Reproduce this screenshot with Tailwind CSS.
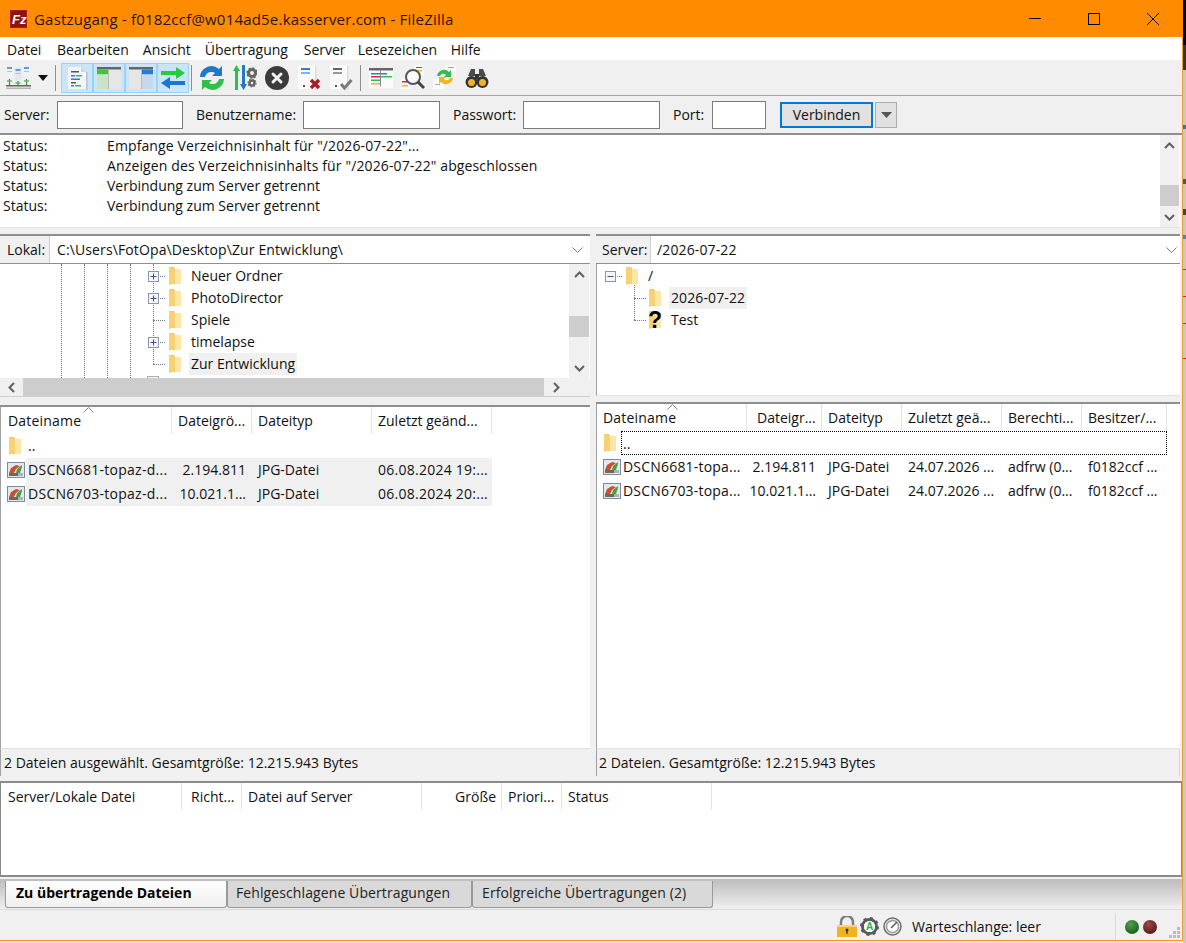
<!DOCTYPE html>
<html lang="de">
<head>
<meta charset="utf-8">
<title>FileZilla</title>
<script src="https://cdn.jsdelivr.net/npm/@tailwindcss/browser@4"></script>
</head>
<body class="m-0 bg-white overflow-hidden">
<svg width="0" height="0" class="absolute">
  <defs>
    <symbol id="folder" viewBox="0 0 14 20">
      <path d="M1 1h5l1 2h6v15h-12z" fill="#f2c65a"/>
      <path d="M7 3h6v15h-6z" fill="#fbe6a6"/>
      <path d="M1 1l6 2v14l-6 2z" fill="#f7d272"/>
    </symbol>
    <symbol id="jpg" viewBox="0 0 18 16">
      <rect x=".5" y=".5" width="17" height="15" fill="#e4e9ef" stroke="#7c8a99"/>
      <path d="M2 11l2-5 5-3 4 1-4 3-2 4z" fill="#c9512f"/>
      <path d="M9 11l1-4 5-4v2l-2 6z" fill="#4f9a3e"/>
      <path d="M2 11h14v3h-14z" fill="#70665c"/>
      <path d="M11 11h5v3h-5z" fill="#a7b3bf"/>
    </symbol>
    <symbol id="plus" viewBox="0 0 11 11">
      <rect x=".5" y=".5" width="10" height="10" fill="#f4f6f8" stroke="#8a97a6"/>
      <path d="M2.500 5.500h6M5.500 2.500v6" stroke="#33508f"/>
    </symbol>
  </defs>
</svg>
<div class="w-[1186px] h-[943px] flex text-[14px] leading-5 text-[#111] font-['Open_Sans','Noto_Sans',sans-serif]">
  <div class="w-[1182px] h-[943px] flex flex-col shrink-0">
  <div class="h-[941px] flex flex-col bg-[#f0f0f0] shrink-0">

    <!-- Title bar -->
    <div class="h-[37px] bg-[#ff8c00] flex items-center pl-[10px] shrink-0">
      <svg class="w-[17px] h-[18px] mr-[7px]" viewBox="0 0 17 18"><rect width="17" height="18" fill="#a81c1c"/><rect x="1" y="1" width="15" height="16" fill="#8f1212"/><text x="2" y="14" font-size="13" font-weight="700" font-style="italic" fill="#fff" font-family="Liberation Sans">Fz</text></svg>
      <span class="text-[#2a1400] text-[15px] tracking-[0.2px]">Gastzugang - f0182ccf@w014ad5e.kasserver.com - FileZilla</span>
      <div class="ml-auto flex items-center">
        <div class="w-[59px] h-[37px] flex items-center justify-center"><div class="w-3 h-px bg-black"></div></div>
        <div class="w-[59px] h-[37px] flex items-center justify-center"><div class="w-3 h-3 border border-black"></div></div>
        <div class="w-[59px] h-[37px] flex items-center justify-center"><svg class="w-3 h-3" viewBox="0 0 12 12"><path d="M0 0l12 12M12 0l-12 12" stroke="#000" stroke-width="1"/></svg></div>
      </div>
    </div>

    <!-- Menu -->
    <div class="h-[23px] bg-white flex items-center pl-[7px] pt-[2px] gap-[14px] text-[#111] shrink-0">
      <span class="w-[36px]">Datei</span><span>Bearbeiten</span><span>Ansicht</span><span class="w-[85px]">Übertragung</span><span class="w-[40px]">Server</span><span class="w-[79px]">Lesezeichen</span><span>Hilfe</span>
    </div>

    <!-- Toolbar -->
    <div class="h-[36px] flex items-center border-b border-[#a6a6a6] pl-[6px] shrink-0">
      <svg class="w-[25px] h-[25px]" viewBox="0 0 25 25">
        <rect x="0" y="1" width="7" height="13" fill="#eef1f5"/><rect x="8.500" y="2.500" width="7" height="13" fill="#e4e8ee"/><rect x="17" y="1" width="7" height="13" fill="#eef1f5"/>
        <rect x="1" y="2" width="5" height="2" fill="#5aa0e0"/><rect x="9.500" y="4" width="5" height="2" fill="#5aa0e0"/><rect x="18" y="2" width="5" height="2" fill="#5aa0e0"/>
        <rect x="1" y="6" width="5" height="1" fill="#b8c0ca"/><rect x="9.500" y="8" width="5" height="1" fill="#b8c0ca"/><rect x="18" y="6" width="5" height="1" fill="#b8c0ca"/>
        <path d="M3.500 14v7M12 16v5M20.500 14v7" stroke="#6a7266" stroke-width="1.200" fill="none"/>
        <path d="M1 16h5M9.500 18h5M18 16h5" stroke="#58c060" stroke-width="1.500"/>
        <rect x="0" y="20" width="25" height="1.500" fill="#5f675f"/><rect x="0" y="22.500" width="25" height="1.500" fill="#b0b5b0"/>
      </svg>
      <svg class="w-[10px] h-[6px] ml-[7px]" viewBox="0 0 10 6"><path d="M0 0h10l-5 6z" fill="#111"/></svg>
      <div class="w-px h-[26px] bg-[#8e8e8e] ml-[7px] mr-[5px]"></div>
      <div class="flex h-[30px] bg-[#cce4f7]">
        <div class="w-[32px] border border-[#99d1ff] flex items-center justify-center">
          <svg class="w-[22px] h-[24px]" viewBox="0 0 22 24"><path d="M2 1h13l5 5v17h-18z" fill="#f3f5f7"/><path d="M15 1l5 5h-5z" fill="#cfd5db"/><rect x="20" y="6" width="1.500" height="18" fill="#b4c4d2"/><rect x="5" y="5" width="8" height="1.500" fill="#555"/><rect x="5" y="9" width="4" height="1.500" fill="#2f7dd0"/><rect x="10" y="9" width="6" height="1.500" fill="#3fb54b"/><rect x="5" y="12.500" width="9" height="1.500" fill="#2f7dd0"/><rect x="5" y="16" width="5" height="1.500" fill="#555"/><rect x="5" y="19" width="3" height="1.500" fill="#2f7dd0"/><rect x="9" y="19" width="6" height="1.500" fill="#3fb54b"/></svg>
        </div>
        <div class="w-[32px] border border-[#99d1ff] flex items-center justify-center">
          <svg class="w-[26px] h-[24px]" viewBox="0 0 26 24"><rect x="1" y="1" width="24" height="22" fill="#e6e6e6"/><rect x="1" y="1" width="24" height="2.500" fill="#666"/><rect x="1" y="3.500" width="11" height="5" fill="#3cc73c"/><rect x="1" y="8.500" width="11" height="14.500" fill="#c9e3c9"/><rect x="12" y="3.500" width="1" height="19.500" fill="#bbb"/></svg>
        </div>
        <div class="w-[32px] border border-[#99d1ff] flex items-center justify-center">
          <svg class="w-[26px] h-[24px]" viewBox="0 0 26 24"><rect x="1" y="1" width="24" height="22" fill="#e6e6e6"/><rect x="1" y="1" width="24" height="2.500" fill="#666"/><rect x="14" y="3.500" width="11" height="5" fill="#1f7fd6"/><rect x="14" y="8.500" width="11" height="14.500" fill="#c6d9ea"/><rect x="13" y="3.500" width="1" height="19.500" fill="#bbb"/></svg>
        </div>
        <div class="w-[32px] border border-[#99d1ff] flex items-center justify-center">
          <svg class="w-[26px] h-[24px]" viewBox="0 0 26 24"><path d="M1 5h15v-4l9 6-9 6v-4h-15z" fill="#27c93f"/><path d="M25 15h-15v-4l-9 6 9 6v-4h15z" fill="#1b78d0"/></svg>
        </div>
      </div>
      <div class="w-px h-[26px] bg-[#8e8e8e] ml-[2px] mr-[7px]"></div>
      <div class="flex items-center gap-[8px]">
        <svg class="w-[26px] h-[26px]" viewBox="0 0 26 26"><path d="M1 12a11.500 11.500 0 0 1 19-8l3-3v10h-10l3-3a6.500 6.500 0 0 0-10 4z" fill="#1f78c8"/><path d="M25 14a11.500 11.500 0 0 1-19 8l-3 3v-10h10l-3 3a6.500 6.500 0 0 0 10-4z" fill="#2ec04a"/></svg>
        <svg class="w-[24px] h-[25px]" viewBox="0 0 24 25"><path d="M3.500 0l3.500 6h-2v19h-3v-19h-2z" fill="#2ec04a"/><path d="M10.500 25l3.500-6h-2v-19h-3v19h-2z" fill="#1f78c8"/><circle cx="19" cy="8" r="3.500" fill="none" stroke="#666" stroke-width="3"/><circle cx="19" cy="8" r="5" fill="none" stroke="#666" stroke-width="1.500" stroke-dasharray="2 1.900"/><circle cx="19" cy="18" r="2.500" fill="none" stroke="#666" stroke-width="2.500"/><circle cx="19" cy="18" r="4" fill="none" stroke="#666" stroke-width="1.200" stroke-dasharray="1.500 1.600"/></svg>
        <svg class="w-[24px] h-[24px]" viewBox="0 0 24 24"><circle cx="12" cy="12" r="12" fill="#3b3b3b"/><path d="M8 8l8 8M16 8l-8 8" stroke="#f2f2f2" stroke-width="3" stroke-linecap="round"/></svg>
        <svg class="w-[24px] h-[25px]" viewBox="0 0 24 25"><path d="M1 0h17v24h-17z" fill="#fafafa"/><rect x="18" y="1" width="1.500" height="24" fill="#dcdcdc"/><rect x="4" y="3" width="9" height="2" fill="#2f7dd0"/><rect x="4" y="7" width="9" height="2" fill="#7fb2e6"/><rect x="6" y="20" width="2" height="2" fill="#555"/><path d="M14 15l8 8M22 15l-8 8" stroke="#a81c24" stroke-width="3.500"/></svg>
        <svg class="w-[24px] h-[25px]" viewBox="0 0 24 25"><path d="M1 0h17v24h-17z" fill="#fafafa"/><rect x="18" y="1" width="1.500" height="24" fill="#dcdcdc"/><rect x="4" y="3" width="9" height="2" fill="#666"/><rect x="4" y="7" width="9" height="2" fill="#999"/><rect x="6" y="20" width="2" height="2" fill="#555"/><path d="M12 19l3.500 4 7-8" stroke="#7b7b7b" stroke-width="3" fill="none"/></svg>
      </div>
      <div class="w-px h-[26px] bg-[#8e8e8e] ml-[7px] mr-[8px]"></div>
      <div class="flex items-center gap-[8px]">
        <svg class="w-[24px] h-[22px]" viewBox="0 0 24 22"><rect x="0" y="1" width="24" height="20" fill="#fafafa"/><rect x="0" y="1" width="24" height="2.500" fill="#666"/><rect x="2" y="6" width="9" height="1.500" fill="#2f7dd0"/><rect x="12" y="6" width="6" height="1.500" fill="#2f7dd0"/><rect x="2" y="9" width="9" height="1.500" fill="#c8352d"/><rect x="12" y="9" width="11" height="1.500" fill="#2ec04a"/><rect x="2" y="12.500" width="9" height="1.500" fill="#2ec04a"/><rect x="2" y="16" width="9" height="1.500" fill="#e8b820"/><rect x="11" y="3.500" width="1" height="16" fill="#888"/></svg>
        <svg class="w-[24px] h-[25px]" viewBox="0 0 24 25"><rect x="13" y="0" width="10" height="11" fill="#fafafa"/><rect x="15" y="2" width="6" height="1" fill="#d8352d"/><rect x="15" y="5" width="6" height="1.500" fill="#e8b820"/><rect x="0" y="14" width="9" height="10" fill="#fafafa"/><rect x="1" y="16" width="5" height="1.500" fill="#c8352d"/><rect x="1" y="20" width="6" height="1.500" fill="#e8b820"/><circle cx="12" cy="12" r="7" fill="#fff" fill-opacity=".75" stroke="#555" stroke-width="2"/><path d="M17 17l6 6" stroke="#444" stroke-width="3"/></svg>
        <svg class="w-[24px] h-[25px]" viewBox="0 0 24 25"><rect x="12" y="0" width="11" height="11" fill="#fafafa"/><rect x="0" y="14" width="11" height="10" fill="#fafafa"/><rect x="15" y="2" width="6" height="1" fill="#aaa"/><rect x="2" y="19" width="5" height="1" fill="#aaa"/><path d="M4 11a7 7 0 0 1 12-4l2-2v7h-7l2-2a3.500 3.500 0 0 0-6 1z" fill="#2ec04a"/><path d="M20 13a7 7 0 0 1-12 4l-2 2v-7h7l-2 2a3.500 3.500 0 0 0 6-1z" fill="#f0b429"/></svg>
        <svg class="w-[24px] h-[24px]" viewBox="0 0 24 24"><path d="M3 10l3-7h4v7zM14 10v-7h4l3 7z" fill="#4a4a4a"/><rect x="10" y="8" width="4" height="5" fill="#333"/><circle cx="6.500" cy="16" r="6" fill="#333"/><circle cx="17.500" cy="16" r="6" fill="#333"/><circle cx="6.500" cy="16.500" r="3.500" fill="#f0b429"/><circle cx="17.500" cy="16.500" r="3.500" fill="#f0b429"/></svg>
      </div>
    </div>

    <!-- Quick connect -->
    <div class="h-[39px] flex items-center pl-[4px] pt-[1px] shrink-0 border-b-2 border-[#8e8e8e]">
      <span class="w-[53px]">Server:</span>
      <div class="w-[126px] h-[28px] bg-white border border-[#7a7a7a]"></div>
      <span class="ml-[13px] w-[107px]">Benutzername:</span>
      <div class="w-[137px] h-[28px] bg-white border border-[#7a7a7a]"></div>
      <span class="ml-[13px] w-[70px]">Passwort:</span>
      <div class="w-[137px] h-[28px] bg-white border border-[#7a7a7a]"></div>
      <span class="ml-[13px] w-[39px]">Port:</span>
      <div class="w-[54px] h-[28px] bg-white border border-[#7a7a7a]"></div>
      <div class="ml-[14px] w-[93px] h-[26px] bg-[#e1e1e1] border-2 border-[#0078d7] flex items-center justify-center">Verbinden</div>
      <div class="ml-[2px] w-[22px] h-[26px] bg-[#e1e1e1] border border-[#adadad] flex items-center justify-center">
        <svg class="w-[11px] h-[6px]" viewBox="0 0 11 6"><path d="M0 0h11l-5.500 6z" fill="#555"/></svg>
      </div>
    </div>

    <!-- Log -->
    <div class="h-[93px] bg-white flex shrink-0 border-b border-[#e3e3e3] mr-[2px]">
      <div class="flex-1 pt-[1px] pl-[3px]">
        <div class="flex h-5"><span class="w-[104px]">Status:</span><span class="tracking-[0.11px]">Empfange Verzeichnisinhalt für "/2026-07-22"...</span></div>
        <div class="flex h-5"><span class="w-[104px]">Status:</span><span class="tracking-[0.13px]">Anzeigen des Verzeichnisinhalts für "/2026-07-22" abgeschlossen</span></div>
        <div class="flex h-5"><span class="w-[104px]">Status:</span><span>Verbindung zum Server getrennt</span></div>
        <div class="flex h-5"><span class="w-[104px]">Status:</span><span>Verbindung zum Server getrennt</span></div>
      </div>
      <div class="w-[19px] bg-[#f0f0f0] flex flex-col items-center mr-[1px]">
        <div class="h-[20px] flex items-center justify-center"><svg class="w-[11px] h-[7px]" viewBox="0 0 11 7"><path d="M1 6l4.500-4.500 4.500 4.500" fill="none" stroke="#606060" stroke-width="2"/></svg></div>
        <div class="flex-1 w-full flex flex-col justify-end"><div class="h-[21px] bg-[#cdcdcd] mb-[1px]"></div></div>
        <div class="h-[20px] flex items-center justify-center"><svg class="w-[11px] h-[7px]" viewBox="0 0 11 7"><path d="M1 1l4.500 4.500 4.500-4.500" fill="none" stroke="#606060" stroke-width="2"/></svg></div>
      </div>
    </div>

    <div class="h-[6px] shrink-0"></div>

    <!-- Panes -->
    <div class="flex shrink-0 h-[542px] mr-[2px]">
      <!-- Left -->
      <div class="w-[590px] flex flex-col shrink-0 ml-0">
        <div class="h-[30px] flex border-t-2 border-b border-[#8e8e8e] bg-white shrink-0">
          <div class="w-[50px] bg-[#f0f0f0] border-r border-[#d0d0d0] pl-[7px] flex items-center">Lokal:</div>
          <div class="flex-1 pl-[7px] flex items-center tracking-[0.12px]">C:\Users\FotOpa\Desktop\Zur Entwicklung\</div>
          <div class="w-[18px] flex items-center"><svg class="w-[11px] h-[6px]" viewBox="0 0 11 6"><path d="M.5.500l5 5 5-5" fill="none" stroke="#777"/></svg></div>
        </div>
        <div class="h-[133px] bg-white relative overflow-hidden flex flex-col shrink-0 border-b border-[#cfcfcf]">
          <div class="flex flex-1 min-h-0">
            <div class="flex-1 relative overflow-hidden">
              <div class="absolute top-0 bottom-0 left-[61px] border-l border-dotted border-[#777]"></div>
              <div class="absolute top-0 bottom-0 left-[84px] border-l border-dotted border-[#777]"></div>
              <div class="absolute top-0 bottom-0 left-[107px] border-l border-dotted border-[#777]"></div>
              <div class="absolute top-0 bottom-0 left-[130px] border-l border-dotted border-[#777]"></div>
              <div class="absolute top-0 h-[100px] left-[153px] border-l border-dotted border-[#777]"></div>
              <div class="absolute top-[112px] left-[147px] w-[12px] h-[4px] bg-[#f4f6f8] border border-[#a8b0ba]"></div>
              <div class="flex flex-col pl-[148px] pt-px">
                <div class="h-[22px] flex items-center">
                  <svg class="w-[11px] h-[11px] relative"><use href="#plus"/></svg>
                  <div class="w-[5px] ml-[1px] border-t border-dotted border-[#777]"></div>
                  <svg class="w-[14px] h-[20px] ml-[3px]"><use href="#folder"/></svg>
                  <span class="ml-[7px] px-[2px]">Neuer Ordner</span>
                </div>
                <div class="h-[22px] flex items-center">
                  <svg class="w-[11px] h-[11px] relative"><use href="#plus"/></svg>
                  <div class="w-[5px] ml-[1px] border-t border-dotted border-[#777]"></div>
                  <svg class="w-[14px] h-[20px] ml-[3px]"><use href="#folder"/></svg>
                  <span class="ml-[7px] px-[2px]">PhotoDirector</span>
                </div>
                <div class="h-[22px] flex items-center">
                  <div class="w-[12px] ml-[5px] mr-[3px] border-t border-dotted border-[#777]"></div>
                  <svg class="w-[14px] h-[20px]"><use href="#folder"/></svg>
                  <span class="ml-[7px] px-[2px]">Spiele</span>
                </div>
                <div class="h-[22px] flex items-center">
                  <svg class="w-[11px] h-[11px] relative"><use href="#plus"/></svg>
                  <div class="w-[5px] ml-[1px] border-t border-dotted border-[#777]"></div>
                  <svg class="w-[14px] h-[20px] ml-[3px]"><use href="#folder"/></svg>
                  <span class="ml-[7px] px-[2px]">timelapse</span>
                </div>
                <div class="h-[22px] flex items-center">
                  <div class="w-[12px] ml-[5px] mr-[3px] border-t border-dotted border-[#777]"></div>
                  <svg class="w-[14px] h-[20px]"><use href="#folder"/></svg>
                  <span class="ml-[7px] px-[2px] bg-[#f0f0f0] h-[22px] flex items-center">Zur Entwicklung</span>
                </div>
              </div>
            </div>
            <div class="w-[20px] bg-[#f0f0f0] flex flex-col items-center mr-px">
              <div class="h-[20px] flex items-center"><svg class="w-[11px] h-[7px]" viewBox="0 0 11 7"><path d="M1 6l4.500-4.500 4.500 4.500" fill="none" stroke="#606060" stroke-width="2"/></svg></div>
              <div class="h-[32px]"></div>
              <div class="h-[21px] w-full bg-[#cdcdcd]"></div>
              <div class="flex-1"></div>
              <div class="h-[20px] flex items-center"><svg class="w-[11px] h-[7px]" viewBox="0 0 11 7"><path d="M1 1l4.500 4.500 4.500-4.500" fill="none" stroke="#606060" stroke-width="2"/></svg></div>
            </div>
          </div>
          <div class="h-[18px] bg-[#f0f0f0] flex items-stretch shrink-0">
            <div class="w-[23px] flex items-center justify-center"><svg class="w-[7px] h-[11px]" viewBox="0 0 7 11"><path d="M6 1l-4.500 4.500 4.500 4.500" fill="none" stroke="#606060" stroke-width="2"/></svg></div>
            <div class="w-[521px] bg-[#cdcdcd]"></div>
            <div class="w-[24px] flex items-center justify-center"><svg class="w-[7px] h-[11px]" viewBox="0 0 7 11"><path d="M1 1l4.500 4.500-4.500 4.500" fill="none" stroke="#606060" stroke-width="2"/></svg></div>
          </div>
        </div>
        <div class="h-[8px] shrink-0"></div>
        <div class="flex-1 bg-white border-t-2 border-[#8e8e8e] border-l border-l-[#a0a0a0] flex flex-col min-h-0">
          <div class="h-[27px] flex shrink-0 relative">
            <svg class="absolute left-[82px] top-0 w-[11px] h-[6px]" viewBox="0 0 11 6"><path d="M.5 5.500l5-5 5 5" fill="none" stroke="#888"/></svg>
            <div class="w-[171px] pl-[7px] border-r border-[#e5e5e5] flex items-center tracking-[0.2px]">Dateiname</div>
            <div class="w-[80px] pl-[6px] border-r border-[#e5e5e5] flex items-center">Dateigrö...</div>
            <div class="w-[120px] pl-[6px] border-r border-[#e5e5e5] flex items-center">Dateityp</div>
            <div class="w-[120px] pl-[6px] border-r border-[#e5e5e5] flex items-center">Zuletzt geänd...</div>
          </div>
          <div class="h-[24px] flex items-center pl-[7px] shrink-0"><svg class="w-[14px] h-[20px]"><use href="#folder"/></svg><span class="ml-[6px] leading-none">..</span></div>
          <div class="h-[24px] flex items-center shrink-0">
            <svg class="w-[18px] h-[16px] ml-[6px] mr-px"><use href="#jpg"/></svg>
            <div class="flex items-center h-full w-[466px] bg-[#f0f0f0]">
              <span class="w-[148px] pl-[2px] tracking-[0.28px]">DSCN6681-topaz-d...</span><span class="w-[78px] pr-[6px] text-right">2.194.811</span><span class="w-[120px] pl-[6px]">JPG-Datei</span><span class="w-[120px] pl-[6px] tracking-[0.25px]">06.08.2024 19:...</span>
            </div>
          </div>
          <div class="h-[24px] flex items-center shrink-0">
            <svg class="w-[18px] h-[16px] ml-[6px] mr-px"><use href="#jpg"/></svg>
            <div class="flex items-center h-full w-[466px] bg-[#f0f0f0]">
              <span class="w-[148px] pl-[2px] tracking-[0.28px]">DSCN6703-topaz-d...</span><span class="w-[78px] pr-[6px] text-right">10.021.1...</span><span class="w-[120px] pl-[6px]">JPG-Datei</span><span class="w-[120px] pl-[6px] tracking-[0.25px]">06.08.2024 20:...</span>
            </div>
          </div>
          <div class="flex-1"></div>
        </div>
        <div class="h-[28px] border-t border-[#e3e3e3] pl-[3px] flex items-center shrink-0 border-l border-l-[#a0a0a0]">2 Dateien ausgewählt. Gesamtgröße: 12.215.943 Bytes</div>
      </div>
      <div class="w-[6px] shrink-0"></div>
      <!-- Right -->
      <div class="flex-1 flex flex-col min-w-0">
        <div class="h-[30px] flex border-t-2 border-b border-[#8e8e8e] bg-white shrink-0">
          <div class="w-[55px] bg-[#f0f0f0] border-r border-[#d0d0d0] pl-[6px] flex items-center">Server:</div>
          <div class="flex-1 pl-[6px] flex items-center tracking-[0.12px]">/2026-07-22</div>
          <div class="w-[14px] flex items-center"><svg class="w-[11px] h-[6px]" viewBox="0 0 11 6"><path d="M.5.500l5 5 5-5" fill="none" stroke="#777"/></svg></div>
        </div>
        <div class="h-[132px] bg-white relative shrink-0 border-b border-[#e3e3e3] border-l border-l-[#a0a0a0]">
          <div class="absolute left-[37px] top-[21px] h-[35px] border-l border-dotted border-[#777]"></div>
          <div class="h-[22px] flex items-center pl-[8px] mt-px">
            <svg class="w-[11px] h-[11px]" viewBox="0 0 11 11"><rect x=".5" y=".5" width="10" height="10" fill="#f4f6f8" stroke="#8a97a6"/><path d="M2.500 5.500h6" stroke="#33508f"/></svg>
            <div class="w-[5px] ml-[1px] border-t border-dotted border-[#777]"></div>
            <svg class="w-[14px] h-[20px] ml-[3px]"><use href="#folder"/></svg>
            <span class="ml-[7px] px-[2px]">/</span>
          </div>
          <div class="h-[22px] flex items-center pl-[37px]">
            <div class="w-[12px] border-t border-dotted border-[#777]"></div>
            <svg class="w-[14px] h-[20px] ml-[2px]"><use href="#folder"/></svg>
            <span class="ml-[7px] px-[2px] bg-[#f0f0f0] h-[22px] flex items-center tracking-[0.12px]">2026-07-22</span>
          </div>
          <div class="h-[22px] flex items-center pl-[37px]">
            <div class="w-[12px] border-t border-dotted border-[#777]"></div>
            <div class="relative w-[14px] h-[20px] ml-[2px]">
              <svg class="w-[14px] h-[20px]"><use href="#folder"/></svg>
              <span class="absolute inset-0 flex items-center justify-center text-[23px] font-bold text-black font-['Liberation_Sans',sans-serif]">?</span>
            </div>
            <span class="ml-[7px] px-[2px]">Test</span>
          </div>
        </div>
        <div class="h-[6px] shrink-0"></div>
        <div class="flex-1 bg-white border-t-2 border-[#8e8e8e] border-l border-l-[#a0a0a0] flex flex-col min-h-0">
          <div class="h-[27px] flex shrink-0 relative">
            <svg class="absolute left-[70px] top-0 w-[11px] h-[6px]" viewBox="0 0 11 6"><path d="M.5 5.500l5-5 5 5" fill="none" stroke="#888"/></svg>
            <div class="w-[150px] pl-[6px] border-r border-[#e5e5e5] flex items-center tracking-[0.2px]">Dateiname</div>
            <div class="w-[75px] pl-[10px] border-r border-[#e5e5e5] flex items-center">Dateigr...</div>
            <div class="w-[80px] pl-[6px] border-r border-[#e5e5e5] flex items-center">Dateityp</div>
            <div class="w-[100px] pl-[6px] border-r border-[#e5e5e5] flex items-center">Zuletzt geä...</div>
            <div class="w-[80px] pl-[6px] border-r border-[#e5e5e5] flex items-center">Berechti...</div>
            <div class="w-[85px] pl-[6px] border-r border-[#e5e5e5] flex items-center">Besitzer/...</div>
          </div>
          <div class="h-[24px] flex items-center pl-[6px] shrink-0"><svg class="w-[14px] h-[20px]"><use href="#folder"/></svg><span class="ml-[4px] w-[546px] h-[24px] border border-dotted border-black pl-px pt-[2px]">..</span></div>
          <div class="h-[24px] flex items-center shrink-0">
            <svg class="w-[18px] h-[16px] ml-[6px] mr-[2px]"><use href="#jpg"/></svg>
            <span class="w-[124px] tracking-[0.2px]">DSCN6681-topa...</span><span class="w-[75px] pr-[6px] text-right">2.194.811</span><span class="w-[80px] pl-[6px]">JPG-Datei</span><span class="w-[100px] pl-[6px]">24.07.2026 ...</span><span class="w-[80px] pl-[6px]">adfrw (0...</span><span class="w-[85px] pl-[6px]">f0182ccf ...</span>
          </div>
          <div class="h-[24px] flex items-center shrink-0">
            <svg class="w-[18px] h-[16px] ml-[6px] mr-[2px]"><use href="#jpg"/></svg>
            <span class="w-[124px] tracking-[0.2px]">DSCN6703-topa...</span><span class="w-[75px] pr-[6px] text-right">10.021.1...</span><span class="w-[80px] pl-[6px]">JPG-Datei</span><span class="w-[100px] pl-[6px]">24.07.2026 ...</span><span class="w-[80px] pl-[6px]">adfrw (0...</span><span class="w-[85px] pl-[6px]">f0182ccf ...</span>
          </div>
          <div class="flex-1"></div>
        </div>
        <div class="h-[28px] border-t border-[#e3e3e3] pl-[2px] flex items-center shrink-0 border-l border-l-[#a0a0a0] border-r border-r-[#d8d8d8]">2 Dateien. Gesamtgröße: 12.215.943 Bytes</div>
      </div>
    </div>

    <div class="h-[5px] shrink-0"></div>

    <!-- Queue -->
    <div class="h-[96px] bg-white border-t-2 border-b-2 border-l border-r border-[#8a8a8a] shrink-0">
      <div class="h-[27px] flex">
        <div class="w-[181px] pl-[7px] border-r border-[#e5e5e5] flex items-center">Server/Lokale Datei</div>
        <div class="w-[60px] pl-[9px] border-r border-[#e5e5e5] flex items-center">Richt...</div>
        <div class="w-[180px] pl-[6px] border-r border-[#e5e5e5] flex items-center">Datei auf Server</div>
        <div class="w-[80px] pr-[5px] border-r border-[#e5e5e5] flex items-center justify-end">Größe</div>
        <div class="w-[60px] pl-[6px] border-r border-[#e5e5e5] flex items-center">Priori...</div>
        <div class="w-[150px] pl-[6px] border-r border-[#e5e5e5] flex items-center">Status</div>
      </div>
    </div>

    <!-- Tabs -->
    <div class="h-[31px] flex shrink-0 pl-[5px] pt-[2px] border-b border-[#dcdcdc] bg-gradient-to-b from-[#bdbdbd] to-[#f0f0f0] mt-[2px]">
      <div class="w-[222px] h-[27px] pb-[2px] bg-gradient-to-b from-white to-[#f0f0f0] border border-t-0 border-[#9a9a9a] rounded-b-[3px] pl-[10px] flex items-center font-bold text-black">Zu übertragende Dateien</div>
      <div class="w-[245px] h-[27px] pb-[2px] bg-[#d9d9d9] border border-t-0 border-[#9a9a9a] rounded-b-[3px] pl-[8px] flex items-center text-[#222] tracking-[0.1px]">Fehlgeschlagene Übertragungen</div>
      <div class="w-[241px] h-[27px] pb-[2px] bg-[#d9d9d9] border border-t-0 border-[#9a9a9a] rounded-b-[3px] pl-[9px] flex items-center text-[#222] tracking-[0.1px]">Erfolgreiche Übertragungen (2)</div>
    </div>

    <!-- Status bar -->
    <div class="flex-1 flex items-center relative pt-[3px]">
      <div class="ml-[837px] flex items-center">
        <svg class="w-[20px] h-[22px]" viewBox="0 0 20 22"><path d="M4 10v-4a6 6 0 0 1 12 0v4" fill="none" stroke="#7d7d7d" stroke-width="2.500"/><rect x="0" y="9" width="20" height="12" fill="#f0b41d"/><rect x="0" y="9" width="20" height="2" fill="#fad56a"/><circle cx="10" cy="14" r="1.500" fill="#333"/><rect x="9.400" y="14" width="1.200" height="4" fill="#333"/></svg>
        <svg class="w-[19px] h-[19px] ml-[3px]" viewBox="0 0 19 19"><circle cx="9.500" cy="9.500" r="7" fill="none" stroke="#5a5a5a" stroke-width="3"/><circle cx="9.500" cy="9.500" r="8.500" fill="none" stroke="#5a5a5a" stroke-width="2" stroke-dasharray="3 3.700"/><circle cx="9.500" cy="9.500" r="5.500" fill="#fff"/><text x="9.500" y="13" font-size="10" font-weight="700" text-anchor="middle" fill="#1fb34a" font-family="Liberation Sans">A</text></svg>
        <svg class="w-[19px] h-[19px] ml-[4px]" viewBox="0 0 19 19"><circle cx="9.500" cy="9.500" r="8.500" fill="#e8e8e8" stroke="#6e6e6e" stroke-width="1.500"/><circle cx="9.500" cy="9.500" r="6" fill="#fff" stroke="#9a9a9a" stroke-width="1.500"/><path d="M8 11l6-6" stroke="#555" stroke-width="1.500"/></svg>
        <span class="ml-[10px] w-[203px]">Warteschlange: leer</span>
        <div class="w-px h-[26px] bg-[#dcdcdc]"></div>
        <span class="ml-[9px] w-[14px] h-[14px] rounded-full bg-[radial-gradient(circle_at_40%_30%,#4fa04f,#0a4f0a)]"></span>
        <span class="ml-[4px] w-[14px] h-[14px] rounded-full bg-[radial-gradient(circle_at_40%_30%,#9a4a4a,#4a0a0a)]"></span>
      </div>
      <svg class="absolute right-[1px] bottom-[1px] w-[12px] h-[12px]" viewBox="0 0 12 12"><path d="M8 0h3v3h-3zM4 4h3v3h-3zM8 4h3v3h-3zM0 8h3v3h-3zM4 8h3v3h-3zM8 8h3v3h-3z" fill="#bcbcbc"/></svg>
    </div>
    <div class="h-px bg-[#f39a2e] shrink-0"></div>
  </div>
  <div class="flex-1 bg-[#e2e2e2]"></div>
  </div>
  <!-- Window edge and what lies behind it -->
  <div class="w-px h-[941px] flex flex-col shrink-0"><div class="h-[37px] bg-[#ff8c00]"></div><div class="flex-1 bg-[#f39a2e]"></div></div>
  <div class="w-[3px] h-[943px] flex flex-col shrink-0 bg-[#c8c8c8]">
    <div class="h-[45px] bg-black"></div>
    <div class="h-[25px] bg-[#333]"></div>
    <div class="h-[55px]"></div>
    <div class="h-[4px] bg-[#4a6ea8]"></div>
    <div class="h-[50px]"></div>
    <div class="h-[5px] bg-[#555]"></div>
    <div class="h-[25px]"></div>
    <div class="h-[6px] bg-[#444]"></div>
    <div class="h-[20px]"></div>
    <div class="h-[4px] bg-[#5b7fb5]"></div>
    <div class="h-[30px]"></div>
    <div class="h-px bg-[#c23030]"></div>
    <div class="h-[26px]"></div>
    <div class="h-px bg-[#c23030]"></div>
    <div class="h-[26px]"></div>
    <div class="h-px bg-[#c23030]"></div>
    <div class="h-[34px]"></div>
    <div class="h-px bg-[#c23030]"></div>
  </div>
</div>
</body>
</html>
